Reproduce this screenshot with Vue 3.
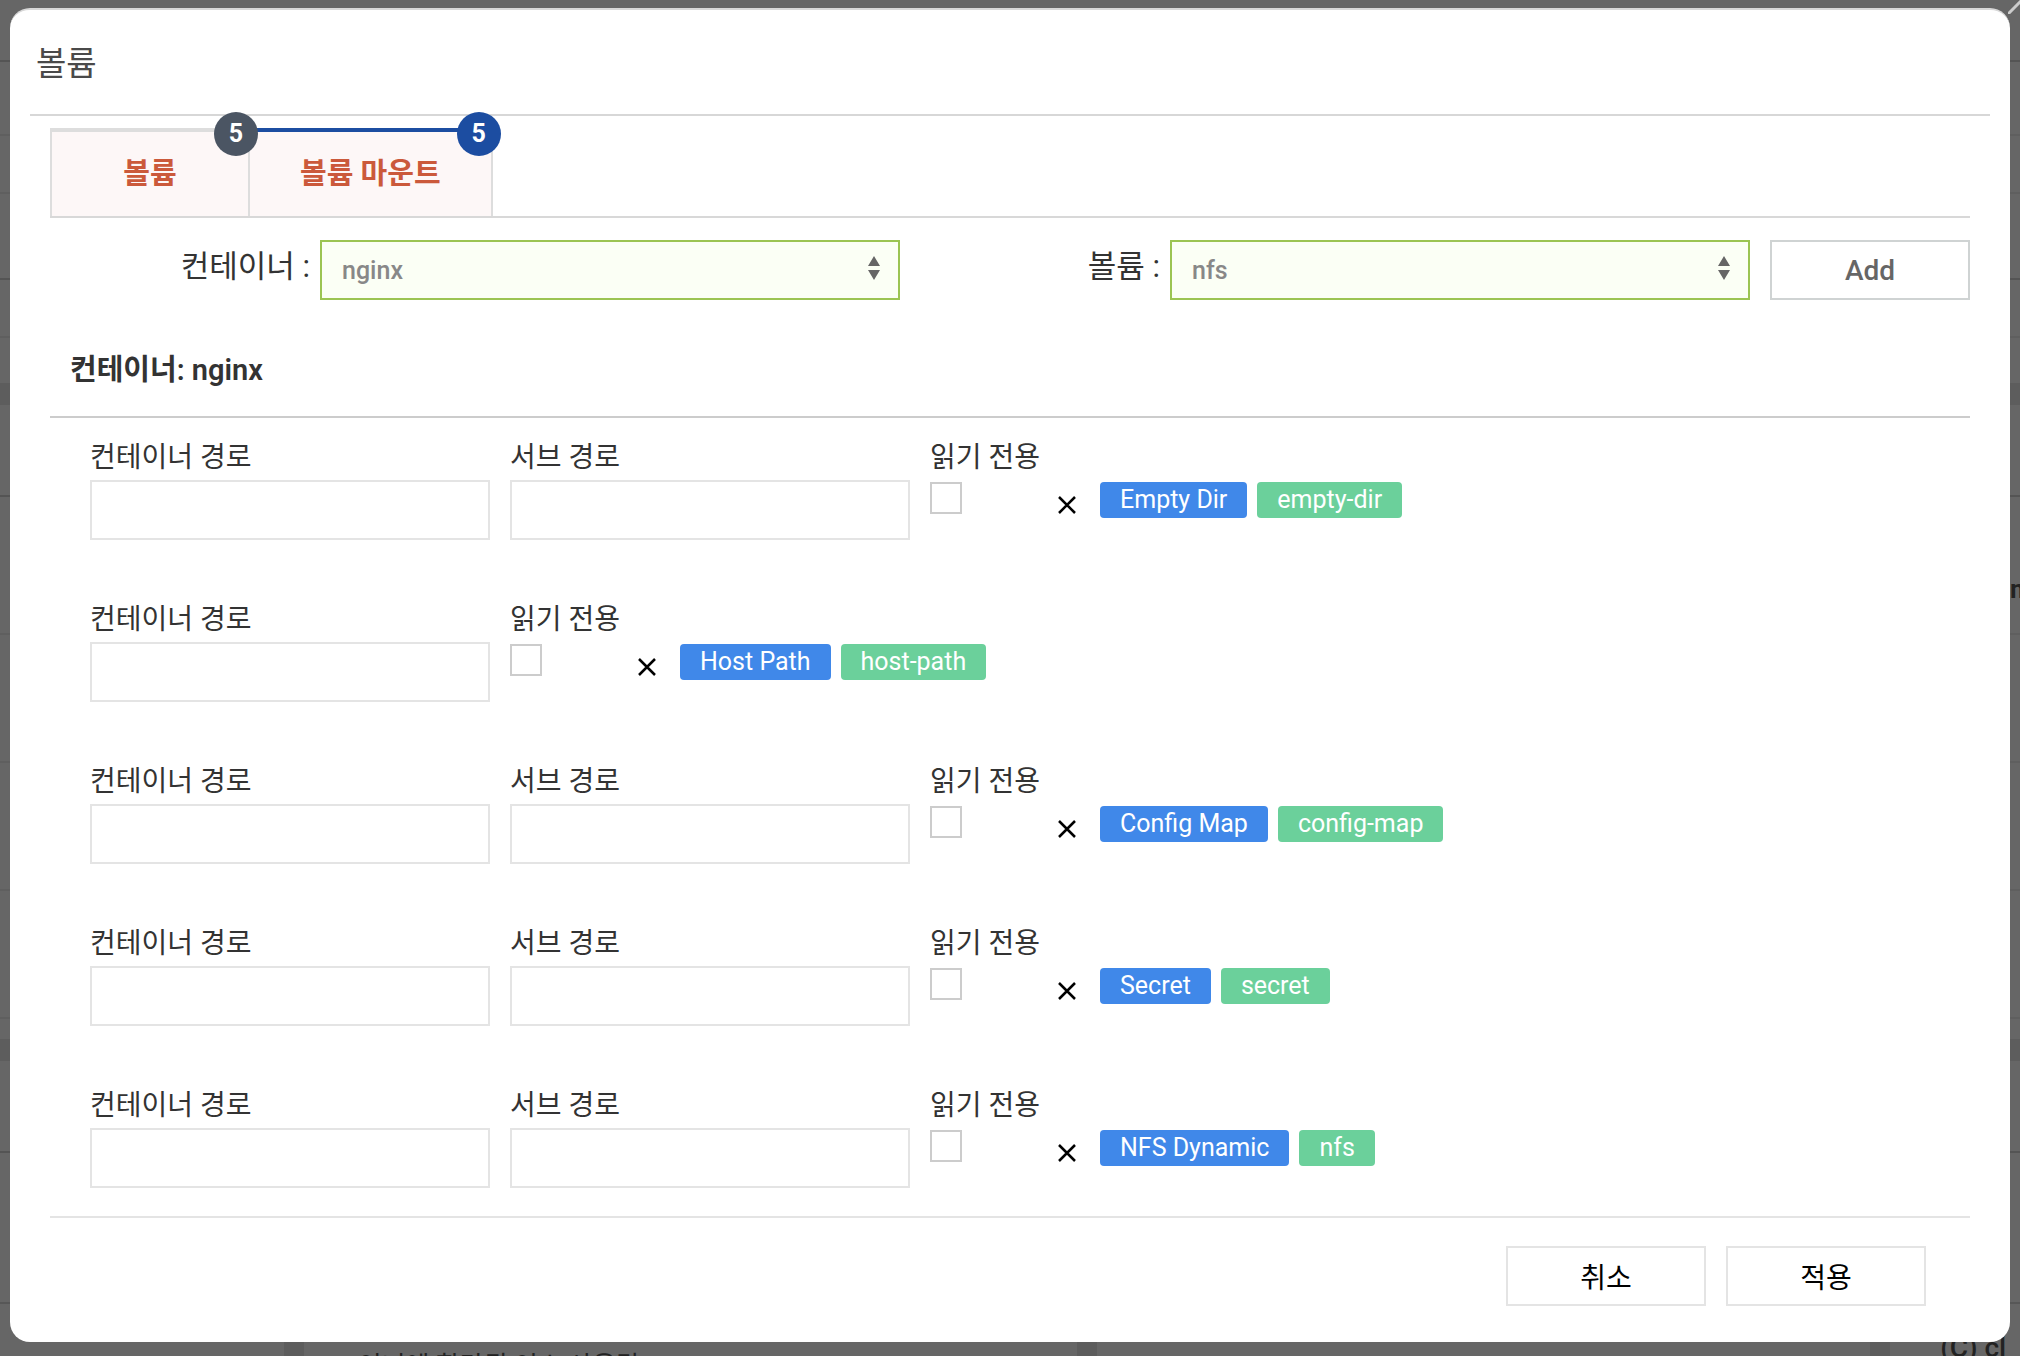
<script setup>
import { ref } from 'vue'

const container = ref('nginx')
const volume = ref('nfs')

const tabs = [
  { name: '볼륨', count: 5, active: false },
  { name: '볼륨 마운트', count: 5, active: true },
]

const mounts = ref([
  { id: 'empty', type: 'Empty Dir', name: 'empty-dir', path: '', hasSub: true, subPath: '', readOnly: false },
  { id: 'host', type: 'Host Path', name: 'host-path', path: '', hasSub: false, subPath: '', readOnly: false },
  { id: 'config', type: 'Config Map', name: 'config-map', path: '', hasSub: true, subPath: '', readOnly: false },
  { id: 'secret', type: 'Secret', name: 'secret', path: '', hasSub: true, subPath: '', readOnly: false },
  { id: 'dynamic', type: 'NFS Dynamic', name: 'nfs', path: '', hasSub: true, subPath: '', readOnly: false },
])
</script>

<template>
  <div class="screen">
    <div class="backdrop" aria-hidden="true">
      <section class="panel top-panel">
        <div class="line h-top strong">
          <svg class="close-icon" viewBox="0 0 28 28"><path d="M0 28 28 0M0 0l28 28" /></svg>
        </div>
        <div class="line h-title"></div>
        <div class="line h-item"></div>
        <div class="line h-head strong"></div>
        <div class="line h-item"></div>
      </section>
      <section class="panel mid-panel">
        <div class="line h-title-lg strong"></div>
        <div class="line h-first"><span class="clip">m</span></div>
        <div class="line h-row"></div>
        <div class="line h-row"></div>
        <div class="line h-row"></div>
      </section>
      <div class="cards">
        <section class="card first"><div class="line h-title-lg strong"></div><div class="line h-body"></div></section>
        <section class="card"><div class="line h-title-lg strong"></div><div class="line h-body"></div><span class="note">이너에 할당된 이스 사용량</span></section>
        <section class="card"><div class="line h-title-lg strong"></div><div class="line h-body"></div></section>
        <section class="card last"><div class="line h-title-lg strong"></div><div class="line h-body"></div><span class="legend">(C) cl</span></section>
      </div>
    </div>

    <div class="overlay">
      <main class="modal" role="dialog" aria-labelledby="modal-title">
        <header class="header"><h1 id="modal-title">볼륨</h1></header>
        <div class="content">
          <nav class="tabs">
            <button v-for="tab in tabs" :key="tab.name" type="button" class="tab" :class="{ active: tab.active }">
              {{ tab.name }}<span class="count">{{ tab.count }}</span>
            </button>
          </nav>

          <div class="picker">
            <label class="picker-label" for="container">컨테이너 :</label>
            <div class="select-box">
              <select id="container" v-model="container"><option>nginx</option></select>
              <svg class="arrows" viewBox="0 0 12 24"><path d="M6 0l6 10H0zM6 24l6-10H0z" /></svg>
            </div>
            <label class="picker-label" for="volume">볼륨 :</label>
            <div class="select-box">
              <select id="volume" v-model="volume"><option>nfs</option></select>
              <svg class="arrows" viewBox="0 0 12 24"><path d="M6 0l6 10H0zM6 24l6-10H0z" /></svg>
            </div>
            <button type="button" class="btn add">Add</button>
          </div>

          <h2 class="section-title">컨테이너: nginx</h2>

          <div class="mounts">
            <div v-for="m in mounts" :key="m.id" class="mount">
              <div class="field">
                <label :for="m.id + '-path'">컨테이너 경로</label>
                <input :id="m.id + '-path'" v-model="m.path" type="text" />
              </div>
              <div v-if="m.hasSub" class="field">
                <label :for="m.id + '-sub'">서브 경로</label>
                <input :id="m.id + '-sub'" v-model="m.subPath" type="text" />
              </div>
              <div class="check">
                <label :for="m.id + '-ro'">읽기 전용</label>
                <input :id="m.id + '-ro'" v-model="m.readOnly" type="checkbox" />
              </div>
              <div class="actions">
                <button type="button" class="remove" aria-label="삭제">
                  <svg viewBox="0 0 18 18"><path d="M1 1l16 16M17 1L1 17" /></svg>
                </button>
                <span class="tag type">{{ m.type }}</span>
                <span class="tag name">{{ m.name }}</span>
              </div>
            </div>
          </div>

          <footer class="footer">
            <button type="button" class="btn">취소</button>
            <button type="button" class="btn">적용</button>
          </footer>
        </div>
      </main>
    </div>
  </div>
</template>

<style>
body { margin: 0; background: #666; }
</style>

<style scoped>
.screen, .screen * { box-sizing: border-box; }
.screen {
  display: grid;
  grid-template-columns: minmax(0, 1fr);
  min-height: 100vh;
  overflow: hidden;
  font-family: Roboto, "Noto Sans CJK KR", sans-serif;
  color: #333;
}
button, input, select { font-family: inherit; margin: 0; }
.backdrop, .overlay { grid-area: 1 / 1; }

.backdrop {
  display: flex;
  flex-direction: column;
  gap: 22px;
  height: 100vh;
  overflow: hidden;
  background: #5d5d5d;
  color: #222;
}
.panel, .card { background: #666; }
.top-panel { padding-bottom: 45px; }
.mid-panel { padding-bottom: 20px; }
.line { border-bottom: 2px solid #5f5f5f; }
.strong { border-bottom-color: #545454; }
.h-top { height: 62px; display: flex; justify-content: flex-end; align-items: flex-start; }
.h-title { height: 74px; }
.h-item { height: 58px; }
.h-head { height: 86px; }
.h-title-lg { height: 92px; }
.h-first { height: 138px; display: flex; justify-content: flex-end; }
.h-row { height: 128px; }
.h-body { height: 151px; border-bottom-color: #575757; }
.close-icon {
  width: 28px;
  height: 28px;
  margin: -14px -16px 0 0;
  fill: none;
  stroke: #ccc;
  stroke-width: 3;
}
.clip { width: 10px; line-height: 32px; margin-top: 76px; font-size: 26px; font-weight: 700; white-space: nowrap; }
.cards { display: flex; gap: 20px; flex: 1; min-height: 0; }
.card { flex: 774; }
.card.first { flex: 284; }
.card.last { flex: 130; }
.note, .legend { display: block; white-space: nowrap; line-height: 32px; }
.note { font-size: 26px; margin: 46px 0 0 54px; }
.legend { font-size: 28px; font-weight: 500; margin: 28px 0 0 50px; }

.overlay { padding: 8px 10px 14px; z-index: 1; }
.modal {
  background: #fff;
  border-top: 2px solid #d8d8d8;
  border-radius: 20px;
  padding: 0 20px 36px;
}
.header { border-bottom: 2px solid #d7d7d7; padding: 4px 6px 0; }
.header h1 { margin: 0; font-size: 33px; line-height: 100px; font-weight: 400; color: #4a4a4a; }
.content { padding: 12px 20px 0; }

.tabs { display: flex; border-bottom: 2px solid #d8d8d8; }
.tab {
  position: relative;
  height: 88px;
  padding: 0 50px;
  min-width: 198px;
  border: 0 solid #ddd;
  border-top-width: 4px;
  border-left-width: 2px;
  background: #fdf7f7;
  color: #cb593b;
  font-size: 29px;
  font-weight: 700;
  line-height: 40px;
}
.tab:last-child { border-right-width: 2px; }
.tab.active { border-top-color: #1c4da1; }
.count {
  position: absolute;
  top: -20px;
  right: -10px;
  z-index: 1;
  width: 44px;
  height: 44px;
  border-radius: 50%;
  background: #4b5563;
  color: #fff;
  font-size: 25px;
  line-height: 44px;
}
.active .count { background: #1c4da1; }

.picker { display: flex; padding-top: 22px; }
.picker-label { width: 260px; text-align: right; font-size: 31px; line-height: 54px; }
.select-box { position: relative; flex: 1; margin-left: 10px; }
.select-box select {
  width: 100%;
  height: 60px;
  padding: 0 20px;
  appearance: none;
  border: 2px solid #9bc453;
  border-radius: 0;
  background: #fbfff5;
  color: #888;
  font-size: 25px;
  font-weight: 500;
}
.arrows { position: absolute; right: 20px; top: 16px; width: 12px; height: 24px; fill: #666; pointer-events: none; }
.btn {
  width: 200px;
  height: 60px;
  padding: 0;
  border: 2px solid #e4e4e4;
  background: #fff;
  color: #000;
  font-size: 28px;
}
.add { margin-left: 20px; border-color: #cfd3d3; color: #666; font-weight: 500; }

.section-title {
  margin: 32px 0 0;
  padding: 0 20px 8px;
  border-bottom: 2px solid #ccc;
  font-size: 29px;
  line-height: 76px;
  font-weight: 600;
}
.mounts { display: flex; flex-direction: column; gap: 62px; padding: 22px 40px 28px; }
.mount { display: flex; gap: 20px; height: 100px; }
.field, .check { display: flex; flex-direction: column; gap: 4px; }
.field { width: 400px; }
.check { width: 120px; gap: 6px; }
.mount label { font-size: 28px; line-height: 36px; white-space: nowrap; }
.field input { width: 100%; height: 60px; padding: 0 20px; border: 2px solid #e4e4e4; font-size: 25px; }
.check input { appearance: none; width: 32px; height: 32px; border: 2px solid #ccc; background: #fff; }
.actions { display: flex; gap: 10px; padding-top: 42px; margin-left: -20px; }
.remove { width: 34px; height: 46px; margin-right: 6px; padding: 0 8px; border: 0; background: none; }
.remove svg { display: block; width: 18px; height: 18px; fill: none; stroke: #000; stroke-width: 2.5; }
.tag { height: 36px; padding: 0 20px; border-radius: 4px; color: #fff; font-size: 25px; line-height: 36px; white-space: nowrap; }
.type { background: #4088e9; }
.name { background: #6bd09b; }

.footer {
  display: flex;
  justify-content: flex-end;
  gap: 20px;
  padding: 28px 44px 0;
  border-top: 2px solid #e4e4e4;
}
</style>
